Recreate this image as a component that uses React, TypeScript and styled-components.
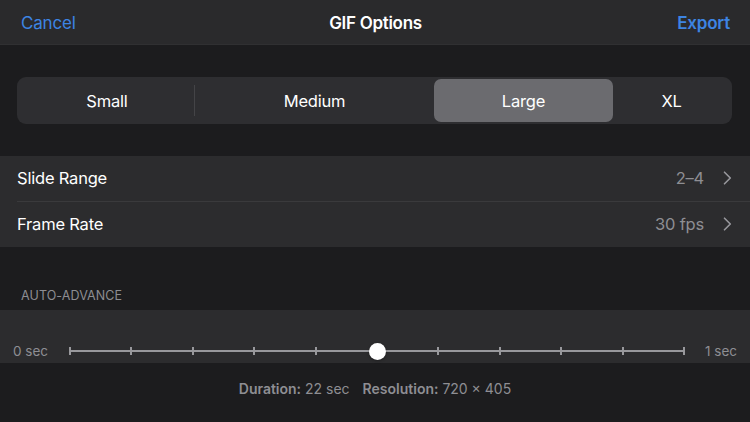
import React from "react";
import styled, { createGlobalStyle } from "styled-components";

const Global = createGlobalStyle`
  html, body { margin: 0; padding: 0; background: #1c1c1e; }
  body { font-family: Inter, "Noto Sans", "Liberation Sans", sans-serif; -webkit-font-smoothing: antialiased; }
  * { box-sizing: border-box; }
`;

const Page = styled.div`
  width: 750px;
  height: 422px;
  background: #1c1c1e;
  color: #fff;
  overflow: hidden;
`;

const NavBar = styled.div`
  height: 45px;
  background: #2a2a2c;
  border-bottom: 1px solid #303032;
  display: grid;
  grid-template-columns: 1fr auto 1fr;
  align-items: center;
  padding: 2px 20px 0 21px;
`;

const NavButton = styled.span<{ $align: "left" | "right"; $strong?: boolean }>`
  color: #3d84e3;
  font-size: 17px;
  font-weight: ${(p) => (p.$strong ? 600 : 400)};
  letter-spacing: -0.2px;
  justify-self: ${(p) => (p.$align === "left" ? "start" : "end")};
`;

const Title = styled.span`
  font-size: 17px;
  font-weight: 600;
  letter-spacing: -0.3px;
`;

const SegmentWrap = styled.div`
  margin: 32px 18px 0 17px;
  height: 47px;
  padding: 2px;
  border-radius: 9px;
  background: #2e2e31;
  display: flex;
`;

const Segment = styled.div<{ $w: number; $selected?: boolean }>`
  width: ${(p) => p.$w}px;
  flex: none;
  display: flex;
  align-items: center;
  justify-content: center;
  font-size: 16.5px;
  letter-spacing: -0.2px;
  color: #fff;
  border-radius: 7px;
  position: relative;
  background: ${(p) => (p.$selected ? "#6b6b6f" : "transparent")};
  &:last-child { flex: 1; }
`;

const DividerSeg = styled(Segment)`
  &::after {
    content: "";
    position: absolute;
    right: 0;
    top: 6px;
    bottom: 6px;
    width: 1px;
    background: #444447;
  }
`;

const List = styled.div`
  margin-top: 32px;
  background: #2c2c2e;
`;

const Row = styled.div<{ $sep?: boolean }>`
  height: 45.5px;
  display: flex;
  align-items: center;
  margin-left: 17px;
  padding-right: 18px;
  border-bottom: ${(p) => (p.$sep ? "1px solid #3a3a3c" : "none")};
`;

const RowLabel = styled.span`
  flex: 1;
  font-size: 16.5px;
  letter-spacing: -0.2px;
  color: #fff;
`;

const RowValue = styled.span`
  font-size: 16.5px;
  letter-spacing: -0.2px;
  color: #8e8e93;
  margin-right: 19px;
`;

const SectionHeader = styled.div`
  height: 63px;
  display: flex;
  align-items: flex-end;
  padding: 0 0 7px 21px;
  font-size: 12.5px;
  color: #8d8d92;
  letter-spacing: 0.1px;
`;

const SliderPanel = styled.div`
  height: 53px;
  background: #2c2c2e;
  display: flex;
  align-items: flex-end;
  padding: 0 13px 4px 13px;
`;

const SliderLabel = styled.span`
  font-size: 13.5px;
  color: #8e8e93;
  line-height: 16px;
`;

const Track = styled.div`
  flex: 1;
  margin: 0 20px 0 21px;
  height: 16px;
  position: relative;
  display: flex;
  justify-content: space-between;
  align-items: center;
  &::before {
    content: "";
    position: absolute;
    left: 0;
    right: 0;
    top: 7px;
    height: 2px;
    background: #98989c;
  }
`;

const Tick = styled.span`
  width: 2px;
  height: 8px;
  background: #98989c;
  position: relative;
`;

const Thumb = styled.span`
  position: absolute;
  left: 50%;
  top: 50%;
  width: 17px;
  height: 17px;
  margin: -8.5px 0 0 -8.5px;
  border-radius: 50%;
  background: #fff;
  box-shadow: 0 1px 3px rgba(0, 0, 0, 0.3);
`;

const Footer = styled.div`
  padding-top: 17px;
  text-align: center;
  font-size: 14px;
  color: #8e8e93;
  line-height: 17px;
`;

const Strong = styled.b`
  font-weight: 600;
`;

const Gap = styled.span`
  display: inline-block;
  width: 13px;
`;

const Chevron = () => (
  <svg width="9" height="14" viewBox="0 0 9 14" fill="none">
    <path d="M1.5 1.2 L7.3 7 L1.5 12.8" stroke="#98989d" strokeWidth="1.6" strokeLinecap="round" strokeLinejoin="round" />
  </svg>
);

export default function App() {
  const ticks = Array.from({ length: 11 });
  return (
    <Page>
      <Global />
      <NavBar>
        <NavButton $align="left">Cancel</NavButton>
        <Title>GIF Options</Title>
        <NavButton $align="right" $strong>Export</NavButton>
      </NavBar>

      <SegmentWrap>
        <DividerSeg $w={176}>Small</DividerSeg>
        <Segment $w={239}>Medium</Segment>
        <Segment $w={179} $selected>Large</Segment>
        <Segment $w={117}>XL</Segment>
      </SegmentWrap>

      <List>
        <Row $sep>
          <RowLabel>Slide Range</RowLabel>
          <RowValue>2–4</RowValue>
          <Chevron />
        </Row>
        <Row>
          <RowLabel>Frame Rate</RowLabel>
          <RowValue>30 fps</RowValue>
          <Chevron />
        </Row>
      </List>

      <SectionHeader>AUTO-ADVANCE</SectionHeader>

      <SliderPanel>
        <SliderLabel>0 sec</SliderLabel>
        <Track>
          {ticks.map((_, i) => (
            <Tick key={i} />
          ))}
          <Thumb />
        </Track>
        <SliderLabel>1 sec</SliderLabel>
      </SliderPanel>

      <Footer>
        <Strong>Duration:</Strong> 22 sec<Gap />
        <Strong>Resolution:</Strong> 720 × 405
      </Footer>
    </Page>
  );
}
